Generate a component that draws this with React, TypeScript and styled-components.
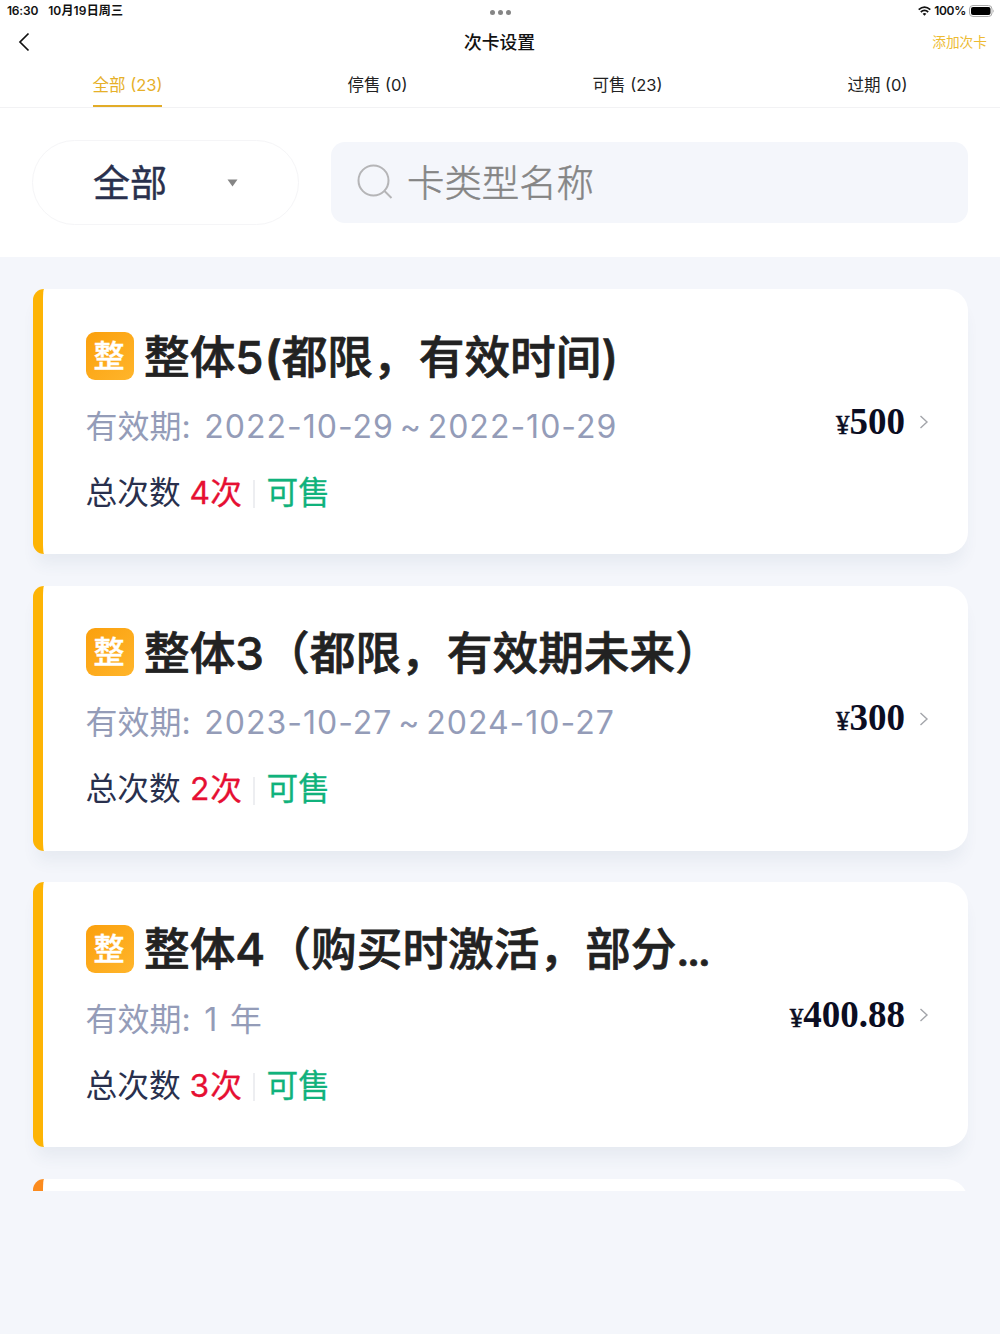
import React from "react";
import styled, { createGlobalStyle } from "styled-components";

const GlobalStyle = createGlobalStyle`
  * { box-sizing: border-box; }
  body {
    margin: 0;
    background: #f4f6fb;
    font-family: Inter, "Noto Sans CJK SC", sans-serif;
    color: #111;
  }
`;

const Screen = styled.div`
  width: 1000px;
  height: 1334px;
  overflow: hidden;
  background: #f4f6fb;
`;

const Top = styled.header`
  height: 257px;
  background: #fff;
`;

const StatusBar = styled.div`
  height: 22px;
  padding: 0 5px 1px 7px;
  display: grid;
  grid-template-columns: 1fr 20px 1fr;
  align-items: center;
  font-size: 12px;
  line-height: 20px;
  font-weight: 600;
  white-space: nowrap;
`;

const StatusLeft = styled.div`
  display: flex;
  gap: 10px;
  letter-spacing: -0.2px;
`;

const StatusDate = styled.span`
  letter-spacing: 0.15px;
`;

const Dots = styled.div`
  display: flex;
  gap: 3px;
  padding-top: 4px;
  margin-left: -1px;
`;

const Dot = styled.i`
  width: 5px;
  height: 5px;
  flex: none;
  border-radius: 50%;
  background: #858585;
`;

const StatusRight = styled.div`
  display: flex;
  justify-content: flex-end;
  align-items: center;
  gap: 3px;
  letter-spacing: -0.3px;
`;

const NavBar = styled.div`
  height: 40px;
  padding: 0 13px 0 18px;
  display: grid;
  grid-template-columns: 1fr 72px 1fr;
  align-items: center;
`;

const NavTitle = styled.h1`
  margin: 2px 0 0 -2.5px;
  font-size: 17.8px;
  line-height: 24px;
  font-weight: 500;
  white-space: nowrap;
`;

const AddLink = styled.a`
  justify-self: end;
  font-size: 13.7px;
  line-height: 20px;
  color: #edbb33;
`;

const Tabs = styled.nav`
  height: 46px;
  display: grid;
  grid-template-columns: repeat(4, 250px);
  justify-items: center;
  border-bottom: 1px solid #f2f2f4;
`;

const Tab = styled.div<{ $active?: boolean }>`
  height: 45px;
  padding-top: 13px;
  margin-left: 5px;
  font-size: 16.5px;
  line-height: 21px;
  white-space: nowrap;
  color: ${(p) => (p.$active ? "#e6b029" : "#222")};
  border-bottom: ${(p) => (p.$active ? "2px solid #e2ac28" : "0")};
`;

const Filters = styled.div`
  height: 149px;
  padding: 32px 32px 0;
  display: flex;
  gap: 32px;
`;

const Picker = styled.div`
  width: 267px;
  height: 85px;
  padding: 0 60px;
  border: 1.5px solid #f5f5f7;
  border-radius: 43px;
  display: flex;
  align-items: center;
  justify-content: space-between;
  font-size: 37px;
  line-height: 54px;
  color: #29304d;
`;

const PickerLabel = styled.span`
  padding-top: 2px;
  -webkit-text-stroke: 0.4px #29304d;
`;

const SearchBox = styled.div`
  width: 637px;
  height: 81px;
  margin-top: 2px;
  padding-left: 26px;
  border-radius: 14px;
  background: #f4f6fb;
  display: flex;
  align-items: center;
  gap: 14px;
  font-size: 37.4px;
  font-weight: 300;
  line-height: 54px;
  color: #858585;
`;

const Placeholder = styled.span`
  padding-top: 2px;
  -webkit-text-stroke: 0.5px #858585;
`;

const List = styled.main`
  height: 933.5px;
  overflow: hidden;
  padding: 32px 32.5px 0;
  display: flex;
  flex-direction: column;
  gap: 31.5px;
`;

const Card = styled.article<{ $bar: string }>`
  flex: none;
  height: 265px;
  padding: 42.5px 39px 0 43px;
  border-left: 10.5px solid ${(p) => p.$bar};
  border-radius: 11px 22px 22px 11px;
  background: #fff;
  box-shadow: 0 14px 16px -4px rgba(60, 85, 120, 0.07);
  display: flex;
  justify-content: space-between;
`;

const Details = styled.div`
  display: flex;
  flex-direction: column;
  white-space: nowrap;
`;

const TitleRow = styled.div`
  height: 48px;
  display: flex;
  align-items: center;
  gap: 10.5px;
`;

const Badge = styled.span`
  width: 48px;
  height: 48px;
  padding-right: 1px;
  border-radius: 9px;
  background: linear-gradient(135deg, #fba00d, #ffb52b);
  color: #fff;
  font-size: 31px;
  line-height: 48px;
  font-weight: 500;
  text-align: center;
  -webkit-text-stroke: 0.4px #fff;
`;

const Title = styled.h2`
  margin: 4px 0 0;
  font-size: 45.7px;
  line-height: 48px;
  font-weight: 500;
  color: #222;
  -webkit-text-stroke: 0.7px #222;
`;

const Paren = styled.span`
  margin-left: 1px;
  font-weight: 600;
`;

const Ellipsis = styled.span`
  font-size: 38px;
  letter-spacing: -2px;
  font-weight: 700;
`;

const Period = styled.div`
  height: 40px;
  margin-top: 27px;
  display: flex;
  align-items: center;
  gap: 13.5px;
  font-size: 32px;
  line-height: 40px;
  color: #949cb8;
`;

const Dates = styled.span<{ $range: boolean }>`
  letter-spacing: 1px;
  word-spacing: ${(p) => (p.$range ? "-4.2px" : "1.5px")};
`;

const Summary = styled.div`
  height: 40px;
  margin-top: 26px;
  display: flex;
  align-items: center;
  font-size: 31.7px;
  line-height: 40px;
  color: #29304d;
  font-variant-numeric: tabular-nums;
`;

const Count = styled.span`
  margin-left: 9px;
  width: 52px;
  color: #e60f32;
  -webkit-text-stroke: 0.3px #e60f32;
`;

const Divider = styled.i`
  width: 2px;
  height: 28px;
  margin: 3px 12px 0 11px;
  background: #edeef1;
`;

const Status = styled.span`
  color: #10b27c;
  -webkit-text-stroke: 0.3px #10b27c;
`;

const PriceBox = styled.div`
  height: 44px;
  margin-top: 68.5px;
  display: flex;
  align-items: center;
  gap: 14.5px;
`;

const Price = styled.span`
  padding-top: 2px;
  font: bold 37px/44px "Liberation Serif", serif;
  color: #0b0d22;
`;

const Yen = styled.small`
  font-size: 27px;
  font-weight: 400;
  -webkit-text-stroke: 0.5px #0b0d22;
`;

interface CardItem {
  id: string;
  title: React.ReactNode;
  period: string;
  count: number;
  price: string;
}

const cards: CardItem[] = [
  {
    id: "5",
    title: <>整体5<Paren>(</Paren>都限，有效时间)</>,
    period: "2022-10-29 ~ 2022-10-29",
    count: 4,
    price: "500",
  },
  {
    id: "3",
    title: "整体3（都限，有效期未来）",
    period: "2023-10-27 ~ 2024-10-27",
    count: 2,
    price: "300",
  },
  {
    id: "4",
    title: <>整体4（购买时激活，部分<Ellipsis>...</Ellipsis></>,
    period: "1 年",
    count: 3,
    price: "400.88",
  },
];

const BackIcon = () => (
  <svg width="12" height="20" viewBox="0 0 12 20" fill="none" stroke="#111" strokeWidth="1.7">
    <path d="M10.500 1.500 2 10l8.500 8.500" />
  </svg>
);

const WifiIcon = () => (
  <svg width="13" height="10" viewBox="0 0 13 10" fill="none" stroke="#111" strokeWidth="1.7">
    <path d="M.7 3.700Q6.500-1.600 12.300 3.700M2.800 6Q6.500 2.700 10.200 6" />
    <path d="M4.600 7.800Q6.500 6.300 8.400 7.800L6.500 9.800Z" fill="#111" stroke="none" />
  </svg>
);

const BatteryIcon = () => (
  <svg width="26" height="12" viewBox="0 0 26 12">
    <rect x=".5" y=".5" width="22.500" height="11" rx="3.500" fill="#fff" stroke="#aaa" />
    <rect x="2" y="2" width="19.500" height="8" rx="2" fill="#000" />
    <path d="M24.300 4.200q1.400 1.800 0 3.600Z" fill="#999" />
  </svg>
);

const CaretIcon = () => (
  <svg width="11" height="8" viewBox="0 0 11 8">
    <path d="M.5.500h10L5.500 7.500Z" fill="#858585" />
  </svg>
);

const SearchIcon = () => (
  <svg width="36" height="37" viewBox="0 0 36 37" fill="none" stroke="#b5b5b7" strokeWidth="2">
    <circle cx="16.500" cy="16.500" r="15" />
    <path d="m27 26.500 7.500 7.500" />
  </svg>
);

const ChevronIcon = () => (
  <svg width="9" height="14" viewBox="0 0 9 14" fill="none" stroke="#a3a5aa" strokeWidth="1.400">
    <path d="m.5 1 6.500 6L.5 13" />
  </svg>
);

export default function App() {
  return (
    <Screen>
      <GlobalStyle />
      <Top>
        <StatusBar>
          <StatusLeft>
            <span>16:30</span>
            <StatusDate>10月19日周三</StatusDate>
          </StatusLeft>
          <Dots><Dot /><Dot /><Dot /></Dots>
          <StatusRight>
            <WifiIcon />
            <span>100%</span>
            <BatteryIcon />
          </StatusRight>
        </StatusBar>
        <NavBar>
          <BackIcon />
          <NavTitle>次卡设置</NavTitle>
          <AddLink>添加次卡</AddLink>
        </NavBar>
        <Tabs>
          <Tab $active>全部 (23)</Tab>
          <Tab>停售 (0)</Tab>
          <Tab>可售 (23)</Tab>
          <Tab>过期 (0)</Tab>
        </Tabs>
        <Filters>
          <Picker>
            <PickerLabel>全部</PickerLabel>
            <CaretIcon />
          </Picker>
          <SearchBox>
            <SearchIcon />
            <Placeholder>卡类型名称</Placeholder>
          </SearchBox>
        </Filters>
      </Top>
      <List>
        {cards.map((card) => (
          <Card key={card.id} $bar="#fdb405">
            <Details>
              <TitleRow>
                <Badge>整</Badge>
                <Title>{card.title}</Title>
              </TitleRow>
              <Period>
                <span>有效期:</span>
                <Dates $range={card.period.includes("~")}>{card.period}</Dates>
              </Period>
              <Summary>
                <span>总次数</span>
                <Count>{card.count}次</Count>
                <Divider />
                <Status>可售</Status>
              </Summary>
            </Details>
            <PriceBox>
              <Price><Yen>¥</Yen>{card.price}</Price>
              <ChevronIcon />
            </PriceBox>
          </Card>
        ))}
        <Card $bar="#fb8b1e" />
      </List>
    </Screen>
  );
}
